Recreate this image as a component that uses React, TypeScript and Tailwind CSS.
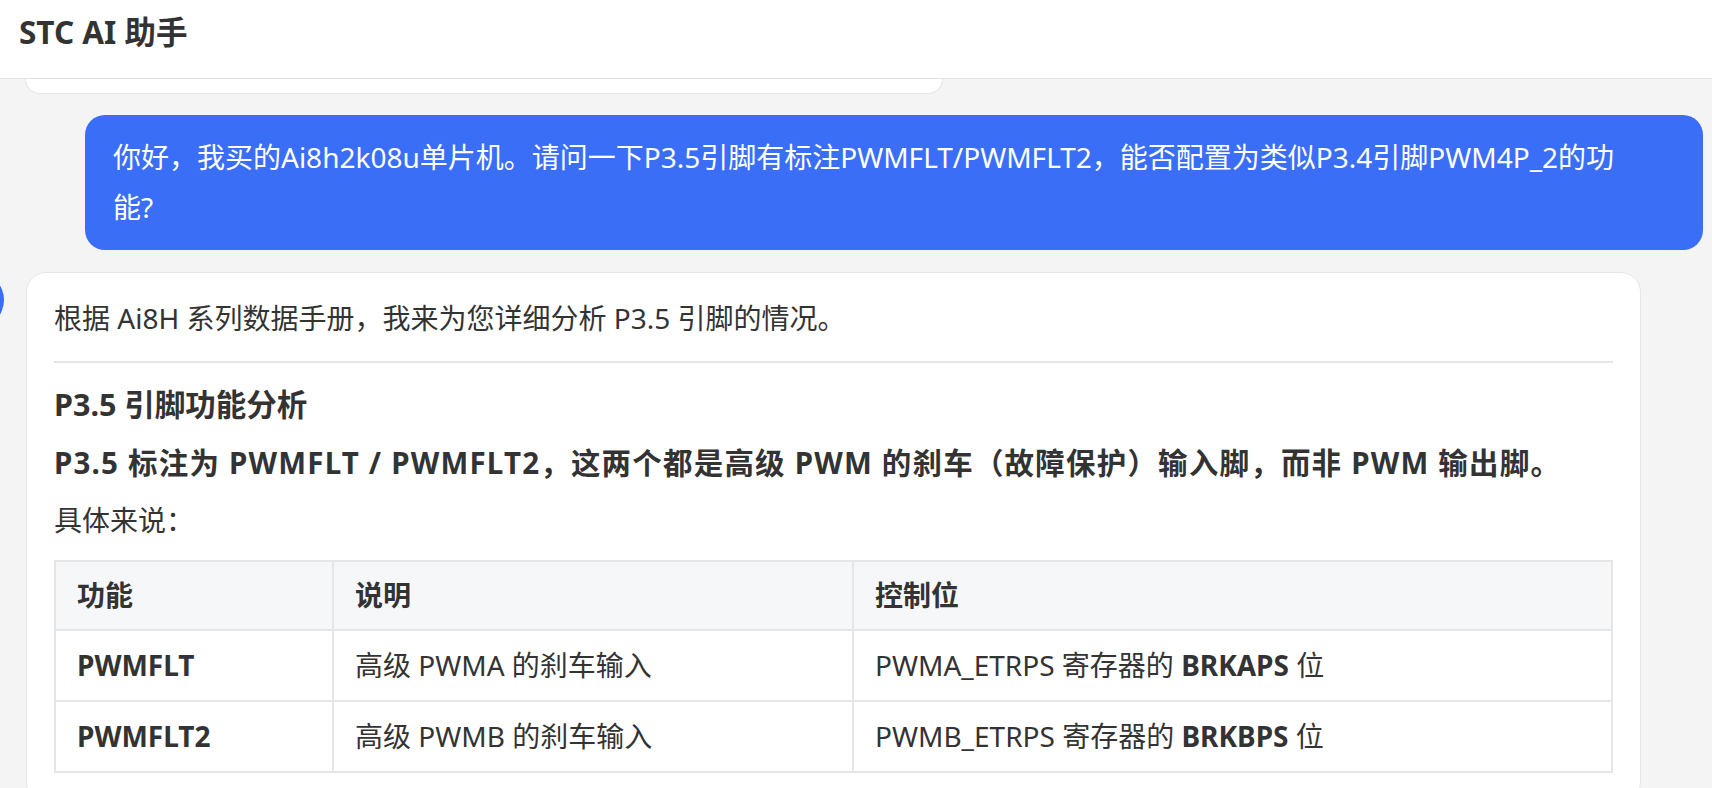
import React from "react";

const FONT = { fontFamily: '"Noto Sans", "Noto Sans CJK SC", sans-serif' };

export default function App() {
  return (
    <div
      className="h-[788px] w-full flex flex-col bg-[#f4f4f4] overflow-hidden text-[#333333]"
      style={FONT}
    >
      <header className="h-[79px] shrink-0 bg-white border-b border-[#e3e3e3] pl-[19px] pt-[8px]">
        <h1 className="text-[31.5px] leading-[47px] font-bold text-[#333333]">STC AI 助手</h1>
      </header>

      <main className="flex-1 flex flex-col overflow-hidden">
        {/* bottom of previous message card */}
        <div className="ml-[25px] w-[918px] h-[15px] shrink-0 bg-white border border-t-0 border-[#e6e6e6] rounded-b-[20px]" />

        {/* user bubble */}
        <div className="mt-[21px] ml-[85px] mr-[9px] shrink-0 bg-[#3b6ef6] text-white rounded-[20px] px-[28px] pt-[17px] pb-[18px] text-[28px] leading-[50px]">
          你好，我买的Ai8h2k08u单片机。请问一下P3.5引脚有标注PWMFLT/PWMFLT2，能否配置为类似P3.4引脚PWM4P_2的功
          <br />
          能?
        </div>

        {/* assistant message */}
        <div className="mt-[22px] ml-[-52px] flex items-start gap-[22px] shrink-0">
          <div className="w-[56px] h-[56px] shrink-0 rounded-full bg-[#3b6ef6]" />
          <div className="w-[1615px] shrink-0 bg-white border border-[#e6e6e6] rounded-[20px] px-[27px] pt-[21px] pb-[28px] text-[28px] leading-[49px]">
            <p>根据 Ai8H 系列数据手册，我来为您详细分析 P3.5 引脚的情况。</p>
            <hr className="mt-[18px] mb-[18px] border-0 h-[2px] bg-[#e6e6e6]" />
            <h3 className="text-[30.5px] leading-[47px] font-bold">P3.5 引脚功能分析</h3>
            <p className="mt-[10px] text-[29.5px] leading-[49px] tracking-[1.2px] font-bold whitespace-nowrap">
              P3.5 标注为 PWMFLT / PWMFLT2，这两个都是高级 PWM 的刹车（故障保护）输入脚，而非 PWM 输出脚。
            </p>
            <p className="mt-[9px]">具体来说：</p>
            <table className="mt-[15px] w-[1559px] table-fixed border-collapse border-2 border-[#e6e6e6]">
              <colgroup>
                <col className="w-[278px]" />
                <col className="w-[520px]" />
                <col />
              </colgroup>
              <thead>
                <tr className="bg-[#f6f7f8]">
                  <th className="border-2 border-[#e6e6e6] px-[21px] py-[9px] text-left font-bold">功能</th>
                  <th className="border-2 border-[#e6e6e6] px-[21px] py-[9px] text-left font-bold">说明</th>
                  <th className="border-2 border-[#e6e6e6] px-[21px] py-[9px] text-left font-bold">控制位</th>
                </tr>
              </thead>
              <tbody>
                <tr>
                  <td className="border-2 border-[#e6e6e6] px-[21px] py-[10px] font-bold">PWMFLT</td>
                  <td className="border-2 border-[#e6e6e6] px-[21px] py-[10px]">高级 PWMA 的刹车输入</td>
                  <td className="border-2 border-[#e6e6e6] px-[21px] py-[10px]">
                    PWMA_ETRPS 寄存器的 <strong className="font-bold">BRKAPS</strong> 位
                  </td>
                </tr>
                <tr>
                  <td className="border-2 border-[#e6e6e6] px-[21px] py-[10px] font-bold">PWMFLT2</td>
                  <td className="border-2 border-[#e6e6e6] px-[21px] py-[10px]">高级 PWMB 的刹车输入</td>
                  <td className="border-2 border-[#e6e6e6] px-[21px] py-[10px]">
                    PWMB_ETRPS 寄存器的 <strong className="font-bold">BRKBPS</strong> 位
                  </td>
                </tr>
              </tbody>
            </table>
          </div>
        </div>
      </main>
    </div>
  );
}
